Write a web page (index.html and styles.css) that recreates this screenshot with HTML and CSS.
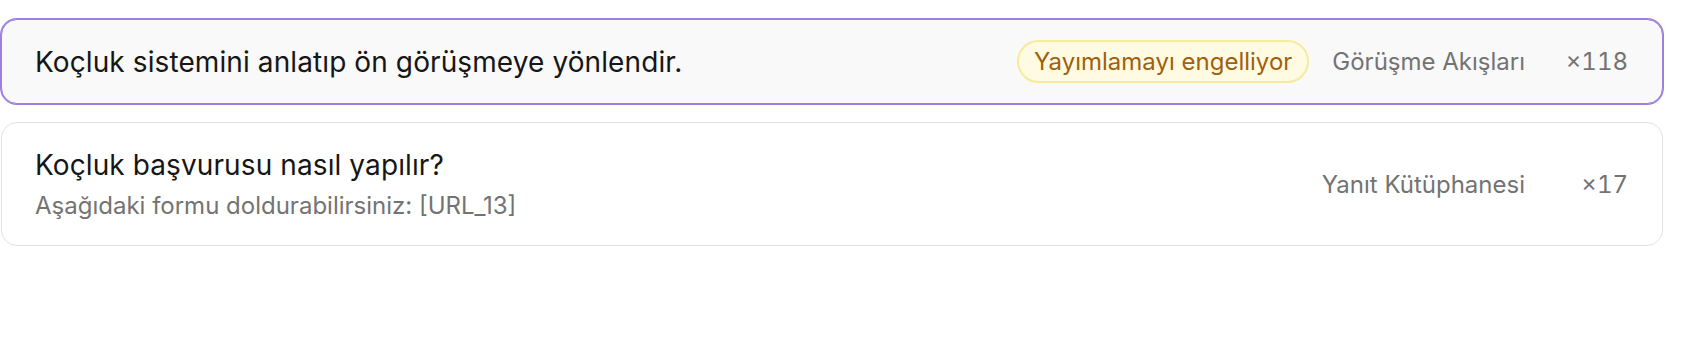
FILE: index.html
```html
<!DOCTYPE html>
<html lang="tr">
<head>
<meta charset="utf-8">
<link rel="stylesheet" href="styles.css">
</head>
<body>
<div class="list">
  <div class="row row-active">
    <div class="main">
      <div class="title">Koçluk sistemini anlatıp ön görüşmeye yönlendir.</div>
    </div>
    <div class="meta">
      <span class="badge">Yayımlamayı engelliyor</span>
      <span class="cat">Görüşme Akışları</span>
      <span class="count">×118</span>
    </div>
  </div>
  <div class="row">
    <div class="main">
      <div class="title">Koçluk başvurusu nasıl yapılır?</div>
      <div class="sub">Aşağıdaki formu doldurabilirsiniz: [URL_13]</div>
    </div>
    <div class="meta">
      <span class="cat">Yanıt Kütüphanesi</span>
      <span class="count">×17</span>
    </div>
  </div>
</div>
</body>
</html>
```
FILE: styles.css
```css
html, body {
  margin: 0;
  padding: 0;
  background: #ffffff;
}
body {
  font-family: Inter, "Noto Sans", sans-serif;
  color: #161616;
}
.list {
  width: 1662px;
  padding: 19px 0 0 1px;
  display: flex;
  flex-direction: column;
  gap: 18px;
}
.row {
  display: flex;
  align-items: center;
  justify-content: space-between;
  border: 1px solid #e2e2e2;
  border-radius: 16px;
  background: #ffffff;
  padding: 0 34px 0 33px;
  min-height: 124px;
  box-sizing: border-box;
}
.row-active {
  min-height: 85px;
  background: #f9f9f9;
  border-color: #9d7fe0;
  box-shadow: 0 0 0 1px #9d7fe0;
}
.main {
  display: flex;
  flex-direction: column;
  gap: 9px;
}
.title {
  font-size: 28px;
  line-height: 34px;
  letter-spacing: 0.1px;
  color: #161616;
}
.sub {
  font-size: 24px;
  line-height: 30px;
  color: #737373;
}
.meta {
  display: flex;
  align-items: center;
  gap: 23px;
}
.badge {
  display: inline-flex;
  align-items: center;
  height: 43px;
  box-sizing: border-box;
  padding: 0 15px;
  border: 2px solid #f8ea9c;
  border-radius: 999px;
  background: #fffbe3;
  color: #a0600c;
  font-size: 24px;
}
.cat {
  font-size: 24px;
  color: #737373;
}
.count {
  min-width: 80px;
  text-align: right;
  font-size: 24px;
  font-variant-numeric: tabular-nums;
  color: #737373;
}
```
